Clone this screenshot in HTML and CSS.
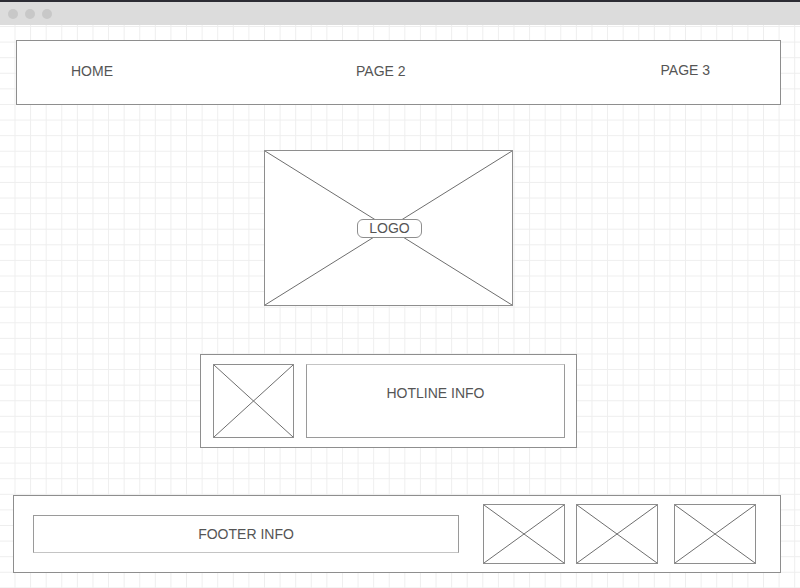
FILE: index.html
```html
<!DOCTYPE html>
<html lang="en">
<head>
<meta charset="UTF-8">
<meta name="viewport" content="width=device-width, initial-scale=1.0">
<title>Wireframe</title>
<link rel="stylesheet" href="styles.css">
</head>
<body>

<div class="titlebar">
<span class="dot"></span>
<span class="dot"></span>
<span class="dot"></span>
</div>

<div class="canvas">

<div class="nav">
<span class="nav-home">HOME</span>
<span class="nav-page2">PAGE 2</span>
<span class="nav-page3">PAGE 3</span>
</div>

<div class="logo">
<svg class="cross" viewBox="0 0 100 100" preserveAspectRatio="none">
<line x1="0" y1="0" x2="100" y2="100" vector-effect="non-scaling-stroke"/>
<line x1="100" y1="0" x2="0" y2="100" vector-effect="non-scaling-stroke"/>
</svg>
<span class="logo-label">LOGO</span>
</div>

<div class="hotline">
<div class="pic hotline-pic">
<svg class="cross" viewBox="0 0 100 100" preserveAspectRatio="none">
<line x1="0" y1="0" x2="100" y2="100" vector-effect="non-scaling-stroke"/>
<line x1="100" y1="0" x2="0" y2="100" vector-effect="non-scaling-stroke"/>
</svg>
</div>
<div class="hotline-info">HOTLINE INFO</div>
</div>

<div class="footer">
<div class="footer-info">FOOTER INFO</div>
<div class="pic footer-pic first">
<svg class="cross" viewBox="0 0 100 100" preserveAspectRatio="none">
<line x1="0" y1="0" x2="100" y2="100" vector-effect="non-scaling-stroke"/>
<line x1="100" y1="0" x2="0" y2="100" vector-effect="non-scaling-stroke"/>
</svg>
</div>
<div class="pic footer-pic second">
<svg class="cross" viewBox="0 0 100 100" preserveAspectRatio="none">
<line x1="0" y1="0" x2="100" y2="100" vector-effect="non-scaling-stroke"/>
<line x1="100" y1="0" x2="0" y2="100" vector-effect="non-scaling-stroke"/>
</svg>
</div>
<div class="pic footer-pic third">
<svg class="cross" viewBox="0 0 100 100" preserveAspectRatio="none">
<line x1="0" y1="0" x2="100" y2="100" vector-effect="non-scaling-stroke"/>
<line x1="100" y1="0" x2="0" y2="100" vector-effect="non-scaling-stroke"/>
</svg>
</div>
</div>

</div>

</body>
</html>
```

FILE: styles.css
```css
body {
margin: 0;
font-family: "Liberation Sans", Arial, sans-serif;
font-size: 14px;
color: #555;
background: #fff;
height: 588px;
overflow: hidden;
}
.titlebar {
height: 23px;
border-top: 2px solid #2c2c34;
background: #dcdcdc;
display: flex;
align-items: center;
padding-left: 8px;
gap: 7px;
}
.dot {
width: 10px;
height: 10px;
border-radius: 50%;
background: #c8c8c8;
}
.canvas {
height: 563px;
padding-top: 15px;
box-sizing: border-box;
background-color: #fff;
background-image:
linear-gradient(to right, #eeeeee 1px, transparent 1px),
linear-gradient(to bottom, #eeeeee 1px, transparent 1px);
background-size: 15.6px 15.6px;
background-position: -1.1px 1px;
}
.nav {
margin-left: 16px;
width: 765px;
height: 65px;
box-sizing: border-box;
border: 1px solid #8e8e8e;
background: #fff;
display: flex;
align-items: center;
padding-bottom: 4px;
}
.nav-home {
margin-left: 54px;
}
.nav-page2 {
margin-left: 243px;
}
.nav-page3 {
margin-left: 255px;
margin-bottom: 2px;
}
.cross {
position: absolute;
left: 0;
top: 0;
width: 100%;
height: 100%;
}
.cross line {
stroke: #6e6e6e;
stroke-width: 1;
}
.logo {
position: relative;
margin: 45px 0 0 264px;
width: 249px;
height: 156px;
box-sizing: border-box;
border: 1px solid #8e8e8e;
background: #fff;
display: flex;
align-items: center;
justify-content: center;
}
.logo-label {
position: relative;
width: 65px;
height: 19px;
box-sizing: border-box;
border: 1px solid #8e8e8e;
border-radius: 6px;
background: #fff;
text-align: center;
line-height: 17px;
margin-left: 2px;
}
.pic {
position: relative;
box-sizing: border-box;
border: 1px solid #8e8e8e;
background: #fff;
flex: none;
}
.hotline {
margin: 48px 0 0 200px;
width: 377px;
height: 94px;
box-sizing: border-box;
border: 1px solid #8e8e8e;
background: #fff;
display: flex;
gap: 12px;
padding: 9px 11px 0 12px;
}
.hotline-pic {
width: 81px;
height: 74px;
}
.hotline-info {
width: 259px;
height: 74px;
box-sizing: border-box;
border: 1px solid #9a9a9a;
border-top-color: #c4c4c4;
text-align: center;
padding-top: 20px;
line-height: 16px;
}
.footer {
margin: 47px 0 0 13px;
width: 768px;
height: 78px;
box-sizing: border-box;
border: 1px solid #8e8e8e;
background: #fff;
display: flex;
align-items: center;
padding-left: 19px;
}
.footer-info {
width: 426px;
height: 38px;
box-sizing: border-box;
border: 1px solid #9a9a9a;
border-bottom-color: #c4c4c4;
text-align: center;
line-height: 36px;
margin-right: 24px;
}
.footer-pic {
width: 82px;
height: 60px;
}
.footer-pic.first {
margin-right: 11px;
}
.footer-pic.second {
margin-right: 16px;
}
```
